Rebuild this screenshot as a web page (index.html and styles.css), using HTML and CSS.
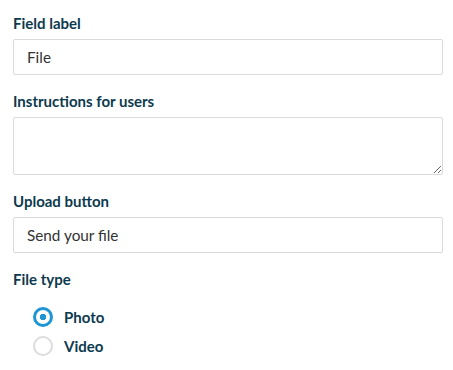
FILE: index.html
```html
<!DOCTYPE html>
<html lang="en">
  <head>
    <meta charset="UTF-8" />
    <meta name="viewport" content="width=device-width, initial-scale=1.0" />
    <title>Upload field settings</title>
    <link rel="stylesheet" href="styles.css">
  </head>
  <body>
    <form class="field-form">
      <!-- field label -->
      <div class="form-group">
        <label class="form-label" for="fieldLabel">Field label</label>
        <input class="form-input" type="text" id="fieldLabel" value="File" />
      </div>

      <!-- instructions -->
      <div class="form-group">
        <label class="form-label" for="instructions">Instructions for users</label>
        <textarea class="form-input form-textarea" id="instructions"></textarea>
      </div>

      <!-- upload button text -->
      <div class="form-group">
        <label class="form-label" for="uploadButton">Upload button</label>
        <input class="form-input" type="text" id="uploadButton" value="Send your file" />
      </div>

      <!-- file type -->
      <div class="form-group">
        <span class="form-label">File type</span>
        <div class="radio-list">
          <label class="radio-option">
            <input type="radio" name="fileType" value="photo" checked />
            <span>Photo</span>
          </label>
          <label class="radio-option">
            <input type="radio" name="fileType" value="video" />
            <span>Video</span>
          </label>
        </div>
      </div>
    </form>
  </body>
</html>
```

FILE: styles.css
```css
:root {
  --label-color: #0d3a4e;
  --text-color: #333;
  --border-color: #dadada;
  --accent: #1f95d4;
}

body {
  margin: 0;
  background-color: #fff;
  color: var(--text-color);
  font-family: Lato, "Open Sans", sans-serif;
}
.field-form {
  width: 430px;
  padding: 13px 10px 0 13px;
}
.form-group {
  display: flex;
  flex-direction: column;
  margin-bottom: 16px;
}
.form-label {
  font-size: 15px;
  line-height: 20px;
  font-weight: 700;
  color: var(--label-color);
  margin-bottom: 6px;
}
.form-input {
  box-sizing: border-box;
  width: 100%;
  height: 36px;
  margin: 0;
  padding: 0 13px;
  border: 1px solid var(--border-color);
  border-radius: 2px;
  font-family: inherit;
  font-size: 15.3px;
  color: var(--text-color);
  background-color: #fff;
  outline: none;
}
.form-textarea {
  height: 58px;
  padding: 8px 13px;
  resize: vertical;
}
.radio-list {
  display: flex;
  flex-direction: column;
  gap: 9px;
  padding: 12px 0 0 20px;
}
.radio-option {
  display: flex;
  align-items: center;
  gap: 11px;
  font-size: 15px;
  font-weight: 700;
  color: var(--label-color);
  cursor: pointer;
}
.radio-option input {
  appearance: none;
  box-sizing: border-box;
  width: 20px;
  height: 20px;
  margin: 0;
  border: 2px solid #dcdcdc;
  border-radius: 50%;
  background-color: #fff;
}
.radio-option input:checked {
  border: 3px solid var(--accent);
  background: radial-gradient(circle, var(--accent) 0 3px, #fff 3.5px);
}
```
